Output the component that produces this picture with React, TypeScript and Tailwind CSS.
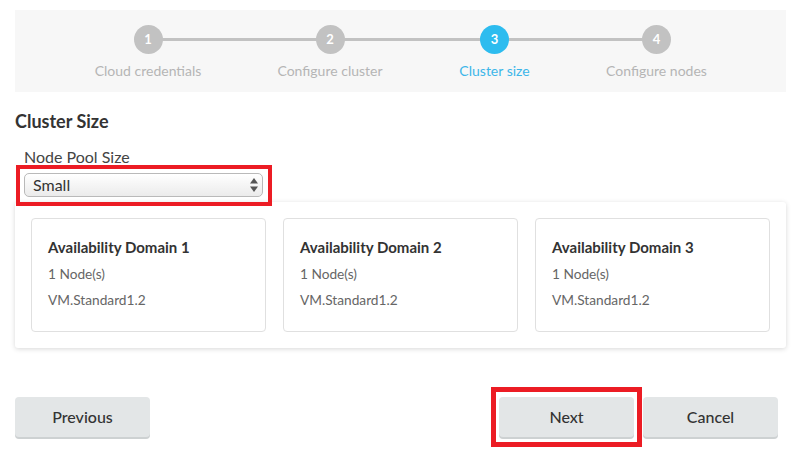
const steps = [
  { n: 1, label: 'Cloud credentials', w: 'w-[105px]' },
  { n: 2, label: 'Configure cluster', w: 'w-[103px]' },
  { n: 3, label: 'Cluster size', w: 'w-[70px]', current: true },
  { n: 4, label: 'Configure nodes', w: 'w-[98px]' },
];

const domains = [1, 2, 3];

const Stepper = () => (
  <div className="flex justify-center bg-[#f7f7f7] pt-[15px] h-[82px]">
    <div className="relative flex gap-[78px]">
      {/* connector behind the circles */}
      <div className="absolute left-[52px] right-[49px] top-[13px] h-[3px] bg-[#c2c2c2]" />
      {steps.map((s) => (
        <div key={s.n} className={`relative flex flex-col items-center ${s.w}`}>
          <div
            className={`flex h-[29px] w-[29px] items-center justify-center rounded-full text-[13px] font-bold text-white ${
              s.current ? 'bg-[#2dbcef]' : 'bg-[#c2c2c2]'
            }`}
          >
            {s.n}
          </div>
          <div
            className={`mt-[9px] whitespace-nowrap text-[14px] leading-[16px] ${
              s.current ? 'text-[#3cb6e9]' : 'text-[#b5b5b5]'
            }`}
          >
            {s.label}
          </div>
        </div>
      ))}
    </div>
  </div>
);

export default function App() {
  return (
    <div
      className="min-h-[457px] bg-white px-[15px] pt-[10px]"
      style={{ fontFamily: 'Lato, "Open Sans", sans-serif' }}
    >
      <Stepper />

      <h2 className="mt-[17px] text-[18px] font-bold leading-[24px] text-[#333]">Cluster Size</h2>

      <div className="mt-[14px] pl-[9px]">
        <div className="text-[16px] leading-[20px] text-[#444]">Node Pool Size</div>
        <div className="relative z-10 mt-[6px] w-[239px]">
          <div className="flex h-[24px] items-center justify-between rounded-[5px] border border-[#b9b9b9] bg-gradient-to-b from-white to-[#ebebeb] pl-[8px] pr-[4px] text-[16px] text-[#333]">
            <span>Small</span>
            <svg width="8" height="14" viewBox="0 0 8 14" fill="#555">
              <polygon points="4,0 8,5.5 0,5.5" />
              <polygon points="0,8.5 8,8.5 4,14" />
            </svg>
          </div>
          {/* annotation box */}
          <div className="pointer-events-none absolute -bottom-[9px] -left-[8px] -right-[9px] -top-[8px] border-4 border-[#ec1c24]" />
        </div>
      </div>

      <div className="mt-[5px] grid grid-cols-3 gap-[17px] rounded-[3px] bg-white p-4 shadow-[0_1px_5px_rgba(0,0,0,0.16)]">
        {domains.map((d) => (
          <div key={d} className="h-[114px] rounded-[4px] border border-[#e0e0e0] px-[16px] pt-[18px]">
            <div className="text-[15px] font-bold leading-[20px] text-[#333]">Availability Domain {d}</div>
            <div className="mt-[7px] text-[13.7px] leading-[20px] text-[#666]">1 Node(s)</div>
            <div className="mt-[6px] text-[13.7px] leading-[20px] text-[#666]">VM.Standard1.2</div>
          </div>
        ))}
      </div>

      <div className="mt-[49px] flex items-start justify-between pr-[8px]">
        <button className="h-[40px] w-[135px] rounded-[4px] bg-[#e3e6e7] text-[16px] font-medium text-[#333] shadow-[0_2px_0_#cdd1d2]">
          Previous
        </button>
        <div className="flex gap-[9px]">
          <div className="relative">
            <button className="h-[40px] w-[135px] rounded-[4px] bg-[#e3e6e7] text-[16px] font-medium text-[#333] shadow-[0_2px_0_#cdd1d2]">
              Next
            </button>
            <div className="pointer-events-none absolute -bottom-[10px] -left-[8px] -right-[8px] -top-[10px] border-[5px] border-[#ec1c24]" />
          </div>
          <button className="h-[40px] w-[135px] rounded-[4px] bg-[#e3e6e7] text-[16px] font-medium text-[#333] shadow-[0_2px_0_#cdd1d2]">
            Cancel
          </button>
        </div>
      </div>
    </div>
  );
}
